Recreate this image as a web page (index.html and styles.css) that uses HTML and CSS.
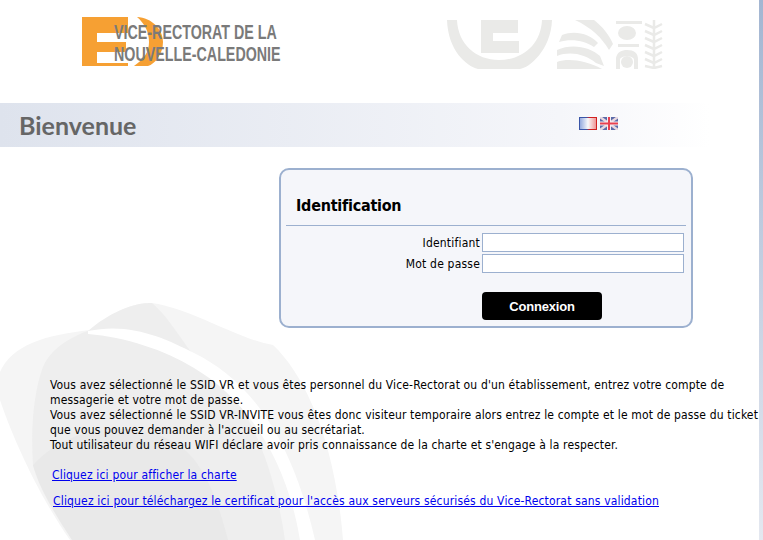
FILE: index.html
```html
<!DOCTYPE html>
<html lang="fr">
<head>
  <meta charset="UTF-8">
  <meta name="viewport" content="width=device-width, initial-scale=1.0">
  <title>Bienvenue - Vice-Rectorat de la Nouvelle-Caledonie</title>
  <link rel="stylesheet" href="styles.css">
</head>
<body>
  <!-- filigrane de fond -->
  <svg class="watermark" width="350" height="250" viewBox="0 290 350 250">
    <path fill="#f5f5f5" d="M0 372C12 345 45 335 90 330C112 312 135 302 152 303C190 308 240 340 273 345C305 375 335 440 343 540H70C35 490 10 430 0 400Z"/>
    <path fill="#eeeeee" d="M88 331C108 313 135 302 152 303C170 318 184 345 194 355C235 385 270 440 285 540H72C50 500 34 470 33 465C30 420 36 385 43 367C50 350 68 338 88 331Z"/>
    <path fill="#ffffff" d="M88 331C130 322 165 338 194 353C245 378 290 430 315 540H300C285 450 240 395 194 368C165 350 125 337 88 334Z"/>
    <path fill="#e9e9e9" d="M33 465C70 425 130 420 170 440C200 455 215 490 228 540H72C52 510 38 485 33 465Z"/>
  </svg>

  <header class="top">
    <div class="logo">
      <svg class="logo-mark" width="90" height="50" viewBox="0 0 90 50">
        <path fill="#f6a033" d="M0 0H46V16H15V25H44V35H15V46H46V49H0Z"/>
        <path fill="#f6a033" d="M55 0C70 1 81 12 81 25C81 37 73 47 66 49H52C62 42 67 35 67 25C67 14 62 6 55 0Z"/>
      </svg>
      <div class="logo-text">VICE-RECTORAT DE LA<br>NOUVELLE-CALEDONIE</div>
    </div>
    <svg class="emblem" width="216" height="49" viewBox="447 20 216 49">
      <path fill="#eaeae8" d="M447 20H457C458 44 476 60 499 60C523 60 541 44 542 20H552C551 50 529 68 520 69H478C466 66 448 50 447 20Z"/>
      <path fill="#eaeae8" d="M481 20H518V33H493V41H519V53H481Z"/>
      <path fill="#eaeae8" d="M575 20H594C602 26 610 36 613 44L609 50C602 38 592 28 575 20Z"/>
      <path fill="#eaeae8" d="M562 35C575 30 590 34 598 43L594 47C585 41 572 38 559 42Z"/>
      <path fill="#eaeae8" d="M557 50C572 43 590 47 600 56L604 66L596 63C585 54 570 51 557 56Z"/>
      <path fill="#eaeae8" d="M557 62C568 58 585 60 602 69H557Z"/>
      <rect fill="#eaeae8" x="616" y="21" width="26" height="3"/>
      <ellipse fill="#eaeae8" cx="627" cy="33" rx="9" ry="7"/>
      <rect fill="#eaeae8" x="618" y="44" width="21" height="3"/>
      <path fill="#eaeae8" d="M616 69V58C617 52 622 50 627 50C634 50 638 53 638 59V69H634V60C634 55 620 55 620 60V69Z"/>
      <circle fill="#eaeae8" cx="627" cy="62" r="6"/>
      <path stroke="#eaeae8" stroke-width="2.5" fill="none" d="M645 24L654 28L662 24M645 31L654 35L662 31M645 38L654 42L662 38M645 45L654 49L662 45M645 52L654 56L662 52M645 59L654 63L662 59M645 66L654 68L662 66M654 20V69"/>
    </svg>
  </header>

  <div class="band">
    <h1>Bienvenue</h1>
    <div class="flags">
      <svg width="18" height="13" viewBox="0 0 18 13">
        <defs>
          <linearGradient id="fr">
            <stop offset="0" stop-color="#8fa6de"/>
            <stop offset="0.5" stop-color="#f8f8fa"/>
            <stop offset="1" stop-color="#ee9090"/>
          </linearGradient>
          <linearGradient id="fr-edge">
            <stop offset="0.4" stop-color="#3a55a8"/>
            <stop offset="0.6" stop-color="#d02020"/>
          </linearGradient>
        </defs>
        <rect x="0.5" y="0.5" width="17" height="12" fill="url(#fr)" stroke="url(#fr-edge)"/>
      </svg>
      <svg width="18" height="13" viewBox="0 0 18 13">
        <rect width="18" height="13" fill="#5a6aa8"/>
        <path stroke="#e8d8e0" stroke-width="2.5" d="M0 0L18 13M18 0L0 13"/>
        <path stroke="#f4f0f4" stroke-width="4" d="M9 0V13M0 6.5H18"/>
        <path stroke="#e84050" stroke-width="2" d="M9 0V13M0 6.5H18"/>
      </svg>
    </div>
  </div>

  <main class="content">
    <section class="login-box">
      <h2>Identification</h2>
      <form class="login-form">
        <label for="login">Identifiant</label>
        <input id="login" type="text">
        <label for="pass">Mot de passe</label>
        <input id="pass" type="password">
        <button type="button">Connexion</button>
      </form>
    </section>

    <p class="info">
      Vous avez sélectionné le SSID VR et vous êtes personnel du Vice-Rectorat ou d'un établissement, entrez votre compte de messagerie et votre mot de passe.<br>
      Vous avez sélectionné le SSID VR-INVITE vous êtes donc visiteur temporaire alors entrez le compte et le mot de passe du ticket que vous pouvez demander à l'accueil ou au secrétariat.<br>
      Tout utilisateur du réseau WIFI déclare avoir pris connaissance de la charte et s'engage à la respecter.
    </p>
    <a class="link link-charte" href="#">Cliquez ici pour afficher la charte</a>
    <a class="link link-certif" href="#">Cliquez ici pour téléchargez le certificat pour l'accès aux serveurs sécurisés du Vice-Rectorat sans validation</a>
  </main>
</body>
</html>
```

FILE: styles.css
```css
html, body {
  height: 100%;
}

body {
  position: relative;
  margin: 0;
  overflow: hidden;
  background: #fff;
  color: #000;
  font-family: "DejaVu Sans Condensed", "DejaVu Sans", sans-serif;
  font-size: 12px;
  letter-spacing: 0.17px;
}

body::after {
  content: "";
  position: absolute;
  top: 0;
  right: 0;
  bottom: 0;
  width: 4px;
  background: linear-gradient(to bottom, #a3b6d2, #e4e8f0);
}

.watermark {
  position: absolute;
  left: 0;
  top: 290px;
}

.top {
  position: relative;
  display: flex;
  height: 103px;
}

.logo {
  position: relative;
  width: 365px;
  padding: 21px 0 0 114px;
  box-sizing: border-box;
}

.logo-mark {
  position: absolute;
  left: 82px;
  top: 17px;
}

.logo-text {
  position: relative;
  color: #7a7a7a;
  font-family: "Liberation Sans", Arial, sans-serif;
  font-size: 21px;
  font-weight: bold;
  letter-spacing: 0;
  line-height: 22px;
  white-space: nowrap;
  transform: scaleX(0.68);
  transform-origin: left top;
}

.emblem {
  margin: 20px 0 0 82px;
}

.band {
  display: flex;
  justify-content: space-between;
  height: 44px;
  background: linear-gradient(to right, #dee3ed, #f5f6fa 560px, #fff 710px);
}

.band h1 {
  margin: 0 0 0 19px;
  color: #666;
  font-family: Lato, "DejaVu Sans", sans-serif;
  font-size: 25px;
  letter-spacing: 0;
  line-height: 45px;
}

.flags {
  display: flex;
  gap: 3px;
  margin: 14px 145px 0 0;
}

.content {
  position: relative;
}

.login-box {
  width: 410px;
  height: 156px;
  margin: 21px 0 0 279px;
  border: 2px solid #9cb0cf;
  border-radius: 10px;
  background: #f5f6fa;
}

.login-box h2 {
  margin: 0 5px;
  padding: 21px 0 4px 10px;
  border-bottom: 1px solid #9cb0cf;
  font-size: 16px;
  letter-spacing: -0.25px;
  line-height: 30px;
}

.login-form {
  display: grid;
  grid-template-columns: 1fr 202px;
  gap: 2px;
  padding: 7px 7px 0 0;
  letter-spacing: 0.2px;
}

.login-form label {
  align-self: center;
  text-align: right;
}

.login-form input {
  box-sizing: border-box;
  width: 202px;
  height: 19px;
  padding: 0 2px;
  border: 1px solid #9cb0cf;
  background: #fff;
}

.login-form button {
  grid-column: 2;
  width: 120px;
  height: 28px;
  margin-top: 17px;
  border: 0;
  border-radius: 4px;
  background: #000;
  color: #fff;
  font-family: "Liberation Sans", Arial, sans-serif;
  font-size: 13px;
  font-weight: bold;
  letter-spacing: -0.2px;
}

.info {
  margin: 50px 0 0 50px;
  width: 709px;
  letter-spacing: 0.15px;
  line-height: 15px;
}

.link {
  display: block;
  color: #0000ee;
  line-height: 15px;
}

.link-charte {
  margin: 15px 0 0 52px;
}

.link-certif {
  margin: 11px 0 0 53px;
}
```
